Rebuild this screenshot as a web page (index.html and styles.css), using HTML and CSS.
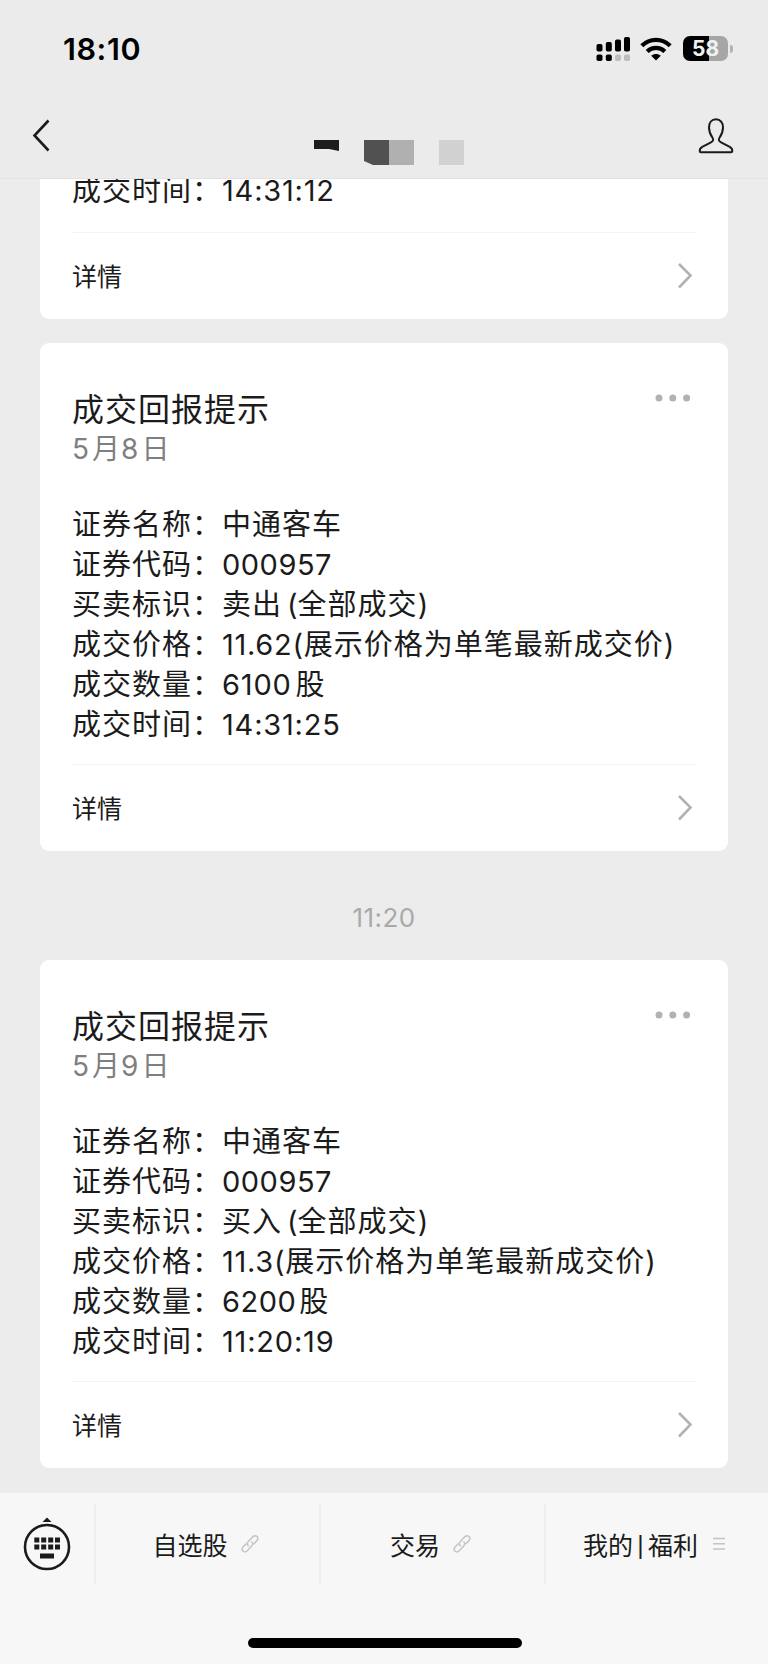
FILE: index.html
```html
<!DOCTYPE html>
<html lang="zh-CN">
<head>
<meta charset="utf-8">
<title>成交回报提示</title>
<link rel="stylesheet" href="styles.css">
</head>
<body>
<div class="screen">
  <header class="header">
    <div class="status">
      <span class="clock">18:10</span>
      <div class="status-icons">
        <svg class="signal" width="36" height="26" viewBox="0 0 36 26">
          <g fill="#000"><rect x="0.5" y="8" width="6" height="7.5" rx="1.8"/><rect x="9.8" y="6" width="6" height="9.5" rx="1.8"/><rect x="19" y="3.5" width="6" height="12" rx="1.8"/><rect x="28" y="1" width="6" height="14.5" rx="1.8"/><rect x="0.5" y="18.5" width="6" height="6.5" rx="1.8"/><rect x="9.8" y="18.5" width="6" height="6.5" rx="1.8"/></g>
          <g fill="#bdbdbd"><rect x="19" y="18.5" width="6" height="6.5" rx="1.8"/><rect x="28" y="18.5" width="6" height="6.5" rx="1.8"/></g>
        </svg>
        <svg class="wifi" width="32" height="24" viewBox="0 0 32 24">
          <g fill="none" stroke="#000" stroke-width="4.2"><path d="M1.8 8.8C9.8 .9 22.2 .9 30.2 8.8"/><path d="M7.2 14.4C12.2 9.6 19.8 9.6 24.8 14.4"/></g>
          <path d="M11.2 18.7C14 16.3 18 16.3 20.8 18.7L16 23.6Z"/>
        </svg>
        <div class="battery"><span class="battery-level">58</span><i class="battery-tip"></i></div>
      </div>
    </div>
    <nav class="nav">
      <svg class="back" width="18" height="34" viewBox="0 0 18 34"><path d="M16.500 1.500L2.500 16.500L16.500 31.500" fill="none" stroke="#1b1b1b" stroke-width="2.600"/></svg>
      <svg class="mosaic" width="152" height="28" viewBox="0 0 152 28">
        <path d="M0 0H25V11L15 9H0Z" fill="#1d1d1d"/><path d="M50 0H75V25H59L50 21Z" fill="#515151"/><path d="M75 0H100V25H75Z" fill="#b0b0b0"/><path d="M125 0H150V25H125Z" fill="#d1d1d1"/>
      </svg>
      <svg class="person" width="36" height="36" viewBox="0 0 36 36"><path d="M18 1.300C13.500 1.300 11 5 11 9.500C11 14 12.400 16.800 14.500 19.800C16 22 14.800 23.500 12.500 24.700L4.200 28.800C1.900 30 1.700 31.500 1.700 33.200Q1.700 34.200 3 34.200H33Q34.300 34.200 34.300 33.200C34.300 31.500 34.100 30 31.800 28.800L23.500 24.700C21.200 23.500 20 22 21.500 19.800C23.600 16.800 25 14 25 9.500C25 5 22.500 1.300 18 1.300Z" fill="none" stroke="#1b1b1b" stroke-width="2"/></svg>
    </nav>
  </header>

  <main class="feed">
    <section class="card card-cut">
      <div class="row"><span class="key">成交时间：</span><span class="n clocked">14:31:12</span></div>
      <div class="more"><span>详情</span><svg width="16" height="28" viewBox="0 0 16 28"><path d="M2 2L13.500 13.500L2 25.500" class="chev"/></svg></div>
    </section>

    <section class="card">
      <svg class="dots" width="36" height="8" viewBox="0 0 36 8"><circle cx="4" cy="4" r="3.500"/><circle cx="17.800" cy="4" r="3.500"/><circle cx="31.600" cy="4" r="3.500"/></svg>
      <h2 class="title">成交回报提示</h2>
      <div class="date"><span class="n">5</span>月<span class="n">8</span>日</div>
      <div class="rows">
        <div class="row"><span class="key">证券名称：</span>中通客车</div>
        <div class="row"><span class="key">证券代码：</span><span class="n">000957</span></div>
        <div class="row"><span class="key">买卖标识：</span>卖出<span class="paren gap">(</span>全部成交<span class="paren">)</span></div>
        <div class="row"><span class="key">成交价格：</span><span class="n price">11.62(</span>展示价格为单笔最新成交价<span class="paren">)</span></div>
        <div class="row"><span class="key">成交数量：</span><span class="n qty">6100</span>股</div>
        <div class="row"><span class="key">成交时间：</span><span class="n clocked">14:31:25</span></div>
      </div>
      <div class="more"><span>详情</span><svg width="16" height="28" viewBox="0 0 16 28"><path d="M2 2L13.500 13.500L2 25.500" class="chev"/></svg></div>
    </section>

    <div class="time">11:20</div>

    <section class="card">
      <svg class="dots" width="36" height="8" viewBox="0 0 36 8"><circle cx="4" cy="4" r="3.500"/><circle cx="17.800" cy="4" r="3.500"/><circle cx="31.600" cy="4" r="3.500"/></svg>
      <h2 class="title">成交回报提示</h2>
      <div class="date"><span class="n">5</span>月<span class="n">9</span>日</div>
      <div class="rows">
        <div class="row"><span class="key">证券名称：</span>中通客车</div>
        <div class="row"><span class="key">证券代码：</span><span class="n">000957</span></div>
        <div class="row"><span class="key">买卖标识：</span>买入<span class="paren gap">(</span>全部成交<span class="paren">)</span></div>
        <div class="row"><span class="key">成交价格：</span><span class="n price">11.3(</span>展示价格为单笔最新成交价<span class="paren">)</span></div>
        <div class="row"><span class="key">成交数量：</span><span class="n qty qty-wide">6200</span>股</div>
        <div class="row"><span class="key">成交时间：</span><span class="n clocked">11:20:19</span></div>
      </div>
      <div class="more"><span>详情</span><svg width="16" height="28" viewBox="0 0 16 28"><path d="M2 2L13.500 13.500L2 25.500" class="chev"/></svg></div>
    </section>
  </main>

  <footer class="footer">
    <div class="menu">
      <div class="keyboard">
        <svg width="48" height="56" viewBox="0 0 48 56">
          <path d="M24 .5L28.500 5H19.500Z" fill="#1b1b1b"/><circle cx="24" cy="30" r="22" fill="none" stroke="#1b1b1b" stroke-width="2.600"/>
          <g fill="#1b1b1b"><path d="M11.300 20.500h5v5h-5zM18.200 20.500h5v5h-5zM25.200 20.500h5v5h-5zM32 20.500h5v5h-5zM11.300 27.500h5v5h-5zM18.200 27.500h5v5h-5zM25.200 27.500h5v5h-5zM32 27.500h5v5h-5zM17 36.500h14v5h-14z"/></g>
        </svg>
      </div>
      <div class="tab"><span>自选股</span><svg class="link" width="18" height="20" viewBox="0 0 18 20"><g fill="none" stroke="#c4c4c4" stroke-width="1.500"><path d="M7.600 12.100C5.800 10.600 6 9 7.300 7.600L12 2.600C15 .2 18.400 3.600 16 6.600L12.600 10.200"/><path d="M10.400 7.500C12.200 9 12 10.600 10.700 12L6 17C3 19.400 -.4 16 2 13L5.400 9.400"/></g></svg></div>
      <div class="tab"><span>交易</span><svg class="link" width="18" height="20" viewBox="0 0 18 20"><g fill="none" stroke="#c4c4c4" stroke-width="1.500"><path d="M7.600 12.100C5.800 10.600 6 9 7.300 7.600L12 2.600C15 .2 18.400 3.600 16 6.600L12.600 10.200"/><path d="M10.400 7.500C12.200 9 12 10.600 10.700 12L6 17C3 19.400 -.4 16 2 13L5.400 9.400"/></g></svg></div>
      <div class="tab tab-mine"><span>我的<span class="bar">|</span>福利</span><svg class="lines" width="12" height="14" viewBox="0 0 12 14"><path d="M0 1.500H12M0 6.700H12M0 12H12" stroke="#c4c4c4" stroke-width="1.500"/></svg></div>
    </div>
    <div class="home"></div>
  </footer>
</div>
</body>
</html>
```

FILE: styles.css
```css
* { box-sizing: border-box; margin: 0; }
body { background: #ececec; color: #1b1b1b; font-family: Inter, "Noto Sans CJK SC", sans-serif; }
svg { display: block; flex: none; }
.screen { width: 768px; height: 1664px; display: flex; flex-direction: column; overflow: hidden; }

.header { height: 179px; flex: none; background: #ebebeb; border-bottom: 1px solid #e2e2e2; }
.status { height: 98px; padding: 0 36px 0 63px; display: flex; align-items: center; justify-content: space-between; color: #000; }
.clock { font-size: 30.5px; font-weight: 600; letter-spacing: 0.6px; padding-bottom: 2px; }
.status-icons { display: flex; align-items: center; padding-bottom: 1px; }
.wifi { margin-left: 8px; }
.battery { position: relative; width: 45px; height: 25px; margin-left: 11px; margin-right: 4px; border-radius: 7px; background: linear-gradient(90deg, #000 26px, #a6a6a6 26px); display: flex; align-items: center; justify-content: center; }
.battery-level { color: #f1f1f1; font-size: 21px; font-weight: 700; line-height: 25px; }
.battery-tip { position: absolute; left: 47px; top: 9px; width: 2.5px; height: 8px; border-radius: 0 3px 3px 0; background: #b3b3b3; }
.nav { height: 80px; padding: 21px 34px 0 32px; display: flex; align-items: flex-start; }
.mosaic { margin: 21px 0 0 264px; }
.person { margin-left: auto; margin-top: -1px; }

.feed { flex: 1; padding: 0 40px; }
.card { position: relative; height: 508px; border-radius: 9px; background: #fff; padding: 44px 32px 0; display: flex; flex-direction: column; }
.card-cut { height: 140px; border-radius: 0 0 9px 9px; padding-top: 0; margin-bottom: 24px; overflow: hidden; }
.card-cut .row { margin-top: -8px; }
.dots { position: absolute; right: 37px; top: 51px; fill: #b2b2b2; }
.title { font-size: 32px; font-weight: 400; line-height: 46px; letter-spacing: 1px; }
.date { color: #7f7f7f; font-size: 28px; line-height: 32px; letter-spacing: 1px; }
.date .n { letter-spacing: 3px; }
.rows { margin-top: 40px; }
.row { height: 40px; line-height: 40px; font-size: 29px; letter-spacing: 1px; white-space: nowrap; }
.n { letter-spacing: 0.5px; }
.paren { letter-spacing: 0; }
.price { letter-spacing: 0.7px; }
.clocked { letter-spacing: 0.8px; }
.gap { margin-left: 5px; }
.qty { letter-spacing: 0.8px; margin-right: 4px; }
.qty-wide { letter-spacing: 0.5px; margin-right: 3px; }
.more { margin-top: auto; height: 87px; flex: none; border-top: 1px solid #f3f3f3; display: flex; align-items: center; justify-content: space-between; font-size: 25px; }
.more span { padding-bottom: 3px; }
.chev { fill: none; stroke: #b2b2b2; stroke-width: 2.6px; }
.more svg { margin-right: 3px; }
.time { height: 109px; padding-top: 26px; text-align: center; line-height: 82px; color: #a9a9a9; font-size: 26px; letter-spacing: 0.4px; }

.footer { height: 171px; flex: none; background: #f7f7f7; padding-top: 11px; }
.menu { height: 80px; display: grid; grid-template-columns: 94px 225px 225px 224px; }
.keyboard { padding: 13px 0 0 23px; }
.tab { border-left: 2px solid #ededed; display: flex; align-items: center; justify-content: center; font-size: 25px; gap: 13px; padding-right: 4px; }
.tab-mine { gap: 15px; padding-right: 6px; }
.bar { margin: 0 4px; font-size: 20px; font-weight: 500; vertical-align: 1px; }
.home { width: 274px; height: 10px; margin: 54px auto 0 248px; border-radius: 5px; background: #000; }
```
